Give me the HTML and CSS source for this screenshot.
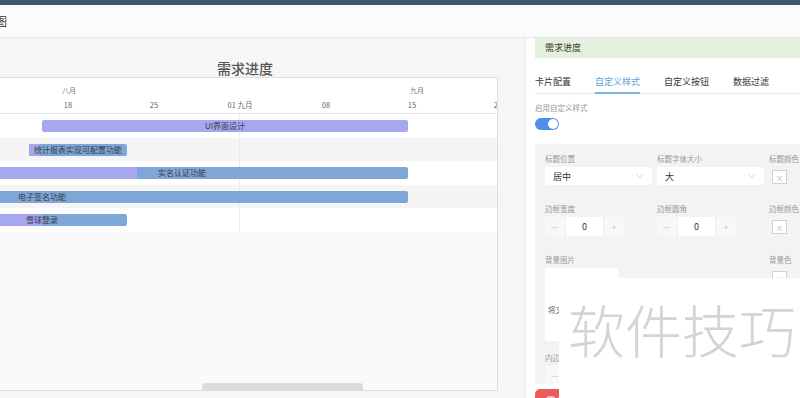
FILE: index.html
```html
<!DOCTYPE html>
<html lang="zh-CN">
<head>
    <meta charset="UTF-8">
    <meta name="viewport" content="width=device-width, initial-scale=1.0">
    <title>甘特图 - 需求进度</title>
    <link rel="stylesheet" href="styles.css">
</head>
<body>
    <div class="topbar"></div>
    <header class="header">
        <span class="header-title">甘特图</span>
    </header>
    <div class="main">
        <div class="chart-area">
            <div class="chart-title">需求进度</div>
            <div class="gantt">
                <div class="gantt-head">
                    <div class="months">
                        <span class="month" style="left: 69px">八月</span>
                        <span class="month" style="left: 417px">九月</span>
                    </div>
                    <div class="days">
                        <div class="day">11</div>
                        <div class="day">18</div>
                        <div class="day">25</div>
                        <div class="day">01 九月</div>
                        <div class="day">08</div>
                        <div class="day">15</div>
                        <div class="day">22</div>
                    </div>
                </div>
                <div class="gantt-rows">
                    <div class="row">
                        <div class="bar" style="left: 42px; width: 366px">
                            <div class="bar-progress" style="width: 100%"></div>
                            <div class="bar-label">UI界面设计</div>
                        </div>
                    </div>
                    <div class="row alt">
                        <div class="bar" style="left: 29px; width: 98px">
                            <div class="bar-progress" style="width: 10%"></div>
                            <div class="bar-label">统计报表实现可配置功能</div>
                        </div>
                    </div>
                    <div class="row">
                        <div class="bar" style="left: -44px; width: 452px">
                            <div class="bar-progress" style="width: 40%"></div>
                            <div class="bar-label">实名认证功能</div>
                        </div>
                    </div>
                    <div class="row alt">
                        <div class="bar" style="left: -324px; width: 732px">
                            <div class="bar-progress" style="width: 0%"></div>
                            <div class="bar-label">电子签名功能</div>
                        </div>
                    </div>
                    <div class="row">
                        <div class="bar" style="left: -43px; width: 170px">
                            <div class="bar-progress" style="width: 50%"></div>
                            <div class="bar-label">雪球登录</div>
                        </div>
                    </div>
                    <div class="grid-line" style="left: 239px"></div>
                </div>
                <div class="gantt-fill"></div>
                <div class="gantt-scroll">
                    <div class="scroll-thumb"></div>
                </div>
            </div>
        </div>

        <aside class="panel">
            <div class="panel-title">需求进度</div>
            <div class="tabs">
                <div class="tab">卡片配置</div>
                <div class="tab active">自定义样式</div>
                <div class="tab">自定义按钮</div>
                <div class="tab">数据过滤</div>
            </div>
            <div class="switch-label">启用自定义样式</div>
            <div class="switch on"><span class="knob"></span></div>

            <div class="form-box">
                <div class="form-row">
                    <div class="field">
                        <label>标题位置</label>
                        <div class="select">
                            <span>居中</span>
                            <svg width="7" height="4" viewBox="0 0 7 4"><polyline points="0.5,0.5 3.5,3.5 6.5,0.5" fill="none" stroke="#c8c8c8" stroke-width="0.8"/></svg>
                        </div>
                    </div>
                    <div class="field">
                        <label>标题字体大小</label>
                        <div class="select">
                            <span>大</span>
                            <svg width="7" height="4" viewBox="0 0 7 4"><polyline points="0.5,0.5 3.5,3.5 6.5,0.5" fill="none" stroke="#c8c8c8" stroke-width="0.8"/></svg>
                        </div>
                    </div>
                    <div class="field">
                        <label>标题颜色</label>
                        <div class="color-box">×</div>
                    </div>
                </div>
                <div class="form-row">
                    <div class="field">
                        <label>边框宽度</label>
                        <div class="number">
                            <span class="num-btn">—</span>
                            <span class="num-input">0</span>
                            <span class="num-btn">+</span>
                        </div>
                    </div>
                    <div class="field">
                        <label>边框圆角</label>
                        <div class="number">
                            <span class="num-btn">—</span>
                            <span class="num-input">0</span>
                            <span class="num-btn">+</span>
                        </div>
                    </div>
                    <div class="field">
                        <label>边框颜色</label>
                        <div class="color-box">×</div>
                    </div>
                </div>
                <div class="form-row tight">
                    <div class="field">
                        <label>背景图片</label>
                        <div class="upload">
                            <svg class="upload-icon" width="18" height="14" viewBox="0 0 18 14"><path d="M5 12H4a3.5 3.5 0 0 1 0-7 5 5 0 0 1 9.6-1A3.5 3.5 0 0 1 14 12h-1M9 7v6M6.8 9.2 9 7l2.2 2.2" fill="none" stroke="#c0c0c0" stroke-width="1.2"/></svg>
                            <div class="upload-text">将文件拖到此处，或点击上传</div>
                        </div>
                    </div>
                    <div class="field"></div>
                    <div class="field">
                        <label>背景色</label>
                        <div class="color-box">×</div>
                    </div>
                </div>
                <div class="form-row">
                    <div class="field">
                        <label>内边距</label>
                        <div class="number">
                            <span class="num-btn">—</span>
                            <span class="num-input">0</span>
                            <span class="num-btn">+</span>
                        </div>
                    </div>
                </div>
            </div>
            <div class="btn-danger">🗑 删除卡片</div>
        </aside>
    </div>

    <div class="watermark">软件技巧</div>
</body>
</html>
```

FILE: styles.css
```css
body {
    margin: 0;
    width: 800px;
    height: 398px;
    overflow: hidden;
    background-color: #f6f6f6;
    font-family: "Noto Sans CJK SC", "Liberation Sans", sans-serif;
    color: #333;
}
.topbar {
    height: 5px;
    background-color: #3f5767;
}
.header {
    height: 32px;
    background-color: #fbfbfb;
    border-bottom: 1px solid #e6e6e6;
    font-size: 11px;
    line-height: 32px;
    white-space: nowrap;
    overflow: hidden;
}
.header-title {
    margin-left: -26px;
}
.main {
    display: flex;
    gap: 27px;
    height: 360px;
}
.chart-area {
    width: 498px;
    flex-shrink: 0;
    overflow: hidden;
}
.chart-title {
    height: 39px;
    box-sizing: border-box;
    padding: 23px 8px 0 0;
    text-align: center;
    font-size: 14px;
    line-height: 14px;
    font-weight: 500;
    color: #555;
}
.gantt {
    height: 314px;
    box-sizing: border-box;
    border: 1px solid #dedede;
    border-left: none;
    background-color: #fafafa;
    display: flex;
    flex-direction: column;
    overflow: hidden;
}
.gantt-head {
    height: 36px;
    flex-shrink: 0;
    box-sizing: border-box;
    padding-top: 6px;
    background-color: #fff;
    border-bottom: 1px solid #e6e6e6;
}
.months {
    position: relative;
    height: 12px;
    line-height: 12px;
    font-size: 7px;
    color: #777;
}
.month {
    position: absolute;
    top: 0;
    transform: translateX(-50%);
}
.days {
    display: flex;
    height: 12px;
    margin: 3px 0 0 -61px;
    line-height: 12px;
    font-size: 7.5px;
    color: #666;
}
.day {
    width: 86px;
    flex-shrink: 0;
    text-align: center;
    white-space: nowrap;
}
.gantt-rows {
    position: relative;
    flex-shrink: 0;
}
.row {
    position: relative;
    height: 23.5px;
    background-color: #fff;
}
.row.alt {
    background-color: #f5f5f5;
}
.bar {
    position: absolute;
    top: 6px;
    height: 12px;
    z-index: 1;
    border-radius: 2px;
    background-color: #7ea7d8;
    overflow: hidden;
}
.bar-progress {
    height: 100%;
    background-color: #a6a8ef;
}
.bar-label {
    position: absolute;
    top: 0;
    left: 0;
    right: 0;
    text-align: center;
    font-size: 8px;
    line-height: 12px;
    color: #3a3a4a;
    white-space: nowrap;
}
.grid-line {
    position: absolute;
    top: 0;
    bottom: 0;
    width: 1px;
    background-color: #ececec;
}
.gantt-fill {
    flex: 1;
}
.gantt-scroll {
    height: 7px;
    flex-shrink: 0;
}
.scroll-thumb {
    width: 161px;
    height: 100%;
    margin-left: 202px;
    border-radius: 3px 3px 0 0;
    background-color: #dcdcdc;
}

/* right config panel */
.panel {
    flex: 1;
    background-color: #fff;
    border-left: 1px solid #e8e8e8;
    padding-left: 9px;
    overflow: hidden;
}
.panel-title {
    height: 20px;
    line-height: 20px;
    padding-left: 10px;
    background-color: #e2f0dd;
    font-size: 9px;
    color: #3a3a3a;
}
.tabs {
    display: flex;
    gap: 24px;
    margin-top: 18px;
    border-bottom: 1px solid #eaeaea;
}
.tab {
    font-size: 9px;
    line-height: 12px;
    padding-bottom: 4px;
    margin-bottom: -1px;
    border-bottom: 2px solid transparent;
    color: #333;
}
.tab.active {
    color: #62a2da;
    border-bottom-color: #7fb3df;
}
.switch-label {
    margin-top: 9px;
    font-size: 7.5px;
    line-height: 10px;
    color: #999;
}
.switch {
    position: relative;
    width: 24px;
    height: 12px;
    margin-top: 5px;
    border-radius: 6px;
    background-color: #4f8fe6;
}
.knob {
    position: absolute;
    top: 1px;
    right: 1px;
    width: 10px;
    height: 10px;
    border-radius: 50%;
    background-color: #fff;
}
.form-box {
    height: 240px;
    box-sizing: border-box;
    margin-top: 14px;
    padding: 10px 0 0 10px;
    background-color: #f3f3f3;
    border-radius: 3px 0 0 3px;
    overflow: hidden;
}
.form-row {
    display: grid;
    grid-template-columns: 112px 112px 112px;
    margin-bottom: 19px;
}
.form-row.tight {
    margin-bottom: 12px;
}
.field {
    display: flex;
    flex-direction: column;
    gap: 3px;
    align-items: flex-start;
}
.field label {
    font-size: 7.5px;
    line-height: 10px;
    color: #999;
    white-space: nowrap;
}
.select {
    width: 107px;
    height: 18px;
    box-sizing: border-box;
    padding: 0 9px 0 8px;
    display: flex;
    align-items: center;
    justify-content: space-between;
    background-color: #fff;
    border-radius: 2px;
    font-size: 9px;
}
.color-box {
    width: 13px;
    height: 12px;
    margin: 3px 0 0 3px;
    border: 1px solid #d0d0d0;
    background-color: #fff;
    display: flex;
    align-items: center;
    justify-content: center;
    font-size: 8px;
    color: #b5b5b5;
}
.number {
    display: flex;
    width: 79px;
    height: 19px;
    font-size: 9px;
}
.num-btn {
    width: 20px;
    display: flex;
    align-items: center;
    justify-content: center;
    background-color: #f8f8f8;
    color: #c0c0c0;
    font-size: 8px;
}
.num-input {
    flex: 1;
    display: flex;
    align-items: center;
    justify-content: center;
    background-color: #fff;
    border-left: 1px solid #eee;
    border-right: 1px solid #eee;
}
.upload {
    width: 73px;
    height: 73px;
    box-sizing: border-box;
    padding: 10px 3px 0;
    background-color: #fff;
    border-radius: 3px;
    display: flex;
    flex-direction: column;
    align-items: center;
    overflow: hidden;
}
.upload-text {
    margin-top: 12px;
    align-self: flex-start;
    font-size: 7.5px;
    color: #666;
    white-space: nowrap;
}
.btn-danger {
    display: inline-flex;
    align-items: center;
    height: 22px;
    margin-top: 5px;
    padding: 0 10px;
    border-radius: 5px;
    background-color: #e95d5d;
    color: #fff;
    font-size: 9px;
}
.watermark {
    position: absolute;
    left: 559px;
    top: 278px;
    width: 241px;
    height: 120px;
    box-sizing: border-box;
    padding: 22px 0 0 9px;
    background-color: #fff;
    font-size: 57px;
    line-height: 1;
    font-weight: 300;
    color: #d4d4d4;
    white-space: nowrap;
}
```
